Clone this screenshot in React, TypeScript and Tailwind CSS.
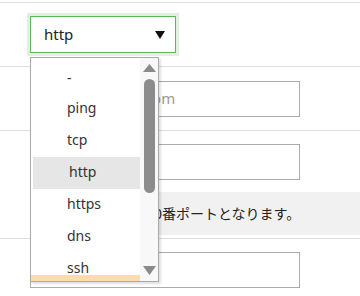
import React from 'react'

const FONT = { fontFamily: '"Noto Sans", "Noto Sans CJK JP", sans-serif' }

const options = ['-', 'ping', 'tcp', 'http', 'https', 'dns', 'ssh']

export default function App() {
  return (
    <div className="relative w-[360px] h-[296px] bg-white overflow-hidden text-[#222]" style={FONT}>
      {/* フォーム本体 */}
      <div className="pt-[2px]">
        <section className="h-[64px] border-t border-[#dddddd] flex items-center pl-[30px]">
          <div className="w-[146px] h-[37px] border border-[#5cb85c] shadow-[0_0_0_3px_#e2f1dd] flex items-center justify-between pl-[13px] pr-[10px] text-[15px]">
            <span>http</span>
            <svg width="10" height="8" viewBox="0 0 10 8">
              <polygon points="0,0 10,0 5,8" fill="#111" />
            </svg>
          </div>
        </section>

        <section className="h-[64px] border-t border-[#dddddd] flex items-center pl-[30px]">
          <TextBox placeholder="www.example.com" />
        </section>

        <section className="h-[108px] border-t border-[#dddddd] pl-[30px] pt-[13px]">
          <TextBox />
          <div className="mt-[12px] h-[43px] bg-[#f1f1f1] flex items-center pl-[4px] text-[14px] text-[#222]">
            ポート未指定時は80番ポートとなります。
          </div>
        </section>

        <section className="border-t border-[#dddddd] pl-[30px] pt-[13px]">
          <TextBox />
        </section>
      </div>

      {/* ドロップダウンリスト */}
      <div className="absolute left-[30px] top-[57px] w-[129px] h-[225px] border border-[#a9a9a9] bg-white shadow-[2px_2px_2px_rgba(0,0,0,0.12)] flex">
        <div className="relative w-[109px] overflow-hidden pt-[3px] text-[14px] text-[#333]">
          {options.map((o, i) => (
            <div
              key={o}
              className={`h-[32px] flex items-center pl-[36px] ${i === 0 ? '' : 'pb-[4px]'} ${o === 'http' ? 'ml-[2px] pl-[34px] bg-[#e6e6e6]' : ''}`}
            >
              {o}
            </div>
          ))}
          <div className="absolute left-0 right-0 bottom-0 h-[6px] bg-[#fddcaa]" />
        </div>
        <div className="w-[18px] bg-[#f8f8f8] flex flex-col items-center pt-[6px] pb-[6px]">
          <svg width="13" height="8" viewBox="0 0 13 8">
            <polygon points="6.5,0 13,8 0,8" fill="#8a8a8a" />
          </svg>
          <div className="mt-[7px] w-[11px] h-[114px] rounded-full bg-[#8c8c8c]" />
          <div className="flex-1" />
          <svg width="13" height="9" viewBox="0 0 13 9">
            <polygon points="0,0 13,0 6.5,9" fill="#8a8a8a" />
          </svg>
        </div>
      </div>
    </div>
  )
}

function TextBox({ placeholder }: { placeholder?: string }) {
  return (
    <div className="w-[270px] h-[36px] border border-[#ababab] flex items-center pl-[11px] text-[15px] text-[#999]">
      {placeholder}
    </div>
  )
}
